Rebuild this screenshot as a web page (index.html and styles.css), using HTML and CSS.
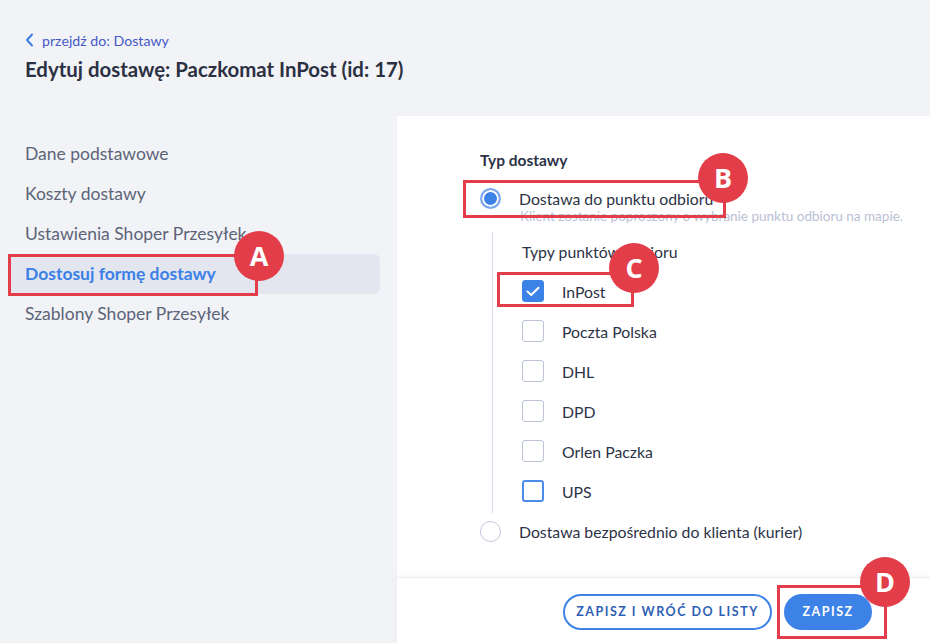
FILE: index.html
```html
<!DOCTYPE html>
<html>
	<head>
		<meta charset="utf-8">
		<title>Edytuj dostawę</title>
		<link rel="stylesheet" href="styles.css">
	</head>
	<body>
		<div class="top">
			<a class="back" href="#">
				<svg width="9" height="14" viewBox="0 0 9 14"><path d="M7 1.5 L2 7 L7 12.5" fill="none" stroke="#3b7de3" stroke-width="2" stroke-linecap="round" stroke-linejoin="round"/></svg>
				przejdź do: Dostawy
			</a>
			<h1>Edytuj dostawę: Paczkomat InPost (id: 17)</h1>
		</div>

		<div class="page">
			<ul class="nav">
				<li>Dane podstawowe</li>
				<li>Koszty dostawy</li>
				<li>Ustawienia Shoper Przesyłek</li>
				<li class="current">Dostosuj formę dostawy</li>
				<li>Szablony Shoper Przesyłek</li>
			</ul>

			<div class="panel">
				<div class="form">
					<div class="label">Typ dostawy</div>

					<div class="radio-row">
						<span class="radio checked"></span>
						<span>Dostawa do punktu odbioru</span>
					</div>
					<div class="hint">Klient zostanie poproszony o wybranie punktu odbioru na mapie.</div>

					<div class="sub">
						<div class="sub-title">Typy punktów odbioru</div>
						<div class="check-row"><span class="box checked"><svg width="14" height="11" viewBox="0 0 14 11"><path d="M1.5 5.5 L5.2 9 L12.5 1.8" fill="none" stroke="#fff" stroke-width="2" stroke-linecap="round" stroke-linejoin="round"/></svg></span>InPost</div>
						<div class="check-row"><span class="box"></span>Poczta Polska</div>
						<div class="check-row"><span class="box"></span>DHL</div>
						<div class="check-row"><span class="box"></span>DPD</div>
						<div class="check-row"><span class="box"></span>Orlen Paczka</div>
						<div class="check-row"><span class="box focus"></span>UPS</div>
					</div>

					<div class="radio-row">
						<span class="radio"></span>
						<span>Dostawa bezpośrednio do klienta (kurier)</span>
					</div>
				</div>

				<div class="footer">
					<button class="btn btn-outline">ZAPISZ I WRÓĆ DO LISTY</button>
					<button class="btn btn-primary">ZAPISZ</button>
				</div>
			</div>
		</div>

		<!-- znaczniki na zrzucie -->
		<div class="mark" style="left:8px;top:254px;width:250px;height:42px;"></div>
		<div class="badge" style="left:234px;top:231px;">A</div>
		<div class="mark" style="left:463px;top:180px;width:263px;height:38px;"></div>
		<div class="badge" style="left:698px;top:153px;">B</div>
		<div class="mark" style="left:497px;top:272px;width:137px;height:35px;"></div>
		<div class="badge" style="left:609px;top:243px;">C</div>
		<div class="mark" style="left:777px;top:585px;width:110px;height:54px;"></div>
		<div class="badge" style="left:860px;top:557px;">D</div>
	</body>
</html>
```

FILE: styles.css
```css
body{
	margin: 0;
	width: 930px;
	height: 643px;
	overflow: hidden;
	position: relative;
	background-color: #f2f3f7;
	font-family: "Lato", "Open Sans", sans-serif;
	color: #2c3346;
}
.top{
	height: 116px;
	box-sizing: border-box;
	padding: 30px 25px 0 25px;
}
.back{
	display: flex;
	align-items: center;
	gap: 8px;
	font-size: 14.2px;
	color: #4559c4;
	text-decoration: none;
	height: 20px;
}
h1{
	margin: 7px 0 0 0;
	font-size: 20.4px;
	font-weight: 700;
	color: #2b3142;
}
.page{
	display: flex;
	height: 527px;
}
.nav{
	list-style: none;
	margin: 0;
	padding: 18px 0 0 10px;
	width: 387px;
	flex-shrink: 0;
}
.nav li{  /* pozycje menu */
	width: 370px;
	height: 40px;
	line-height: 40px;
	box-sizing: border-box;
	padding-left: 15px;
	font-size: 17.5px;
	color: #5c6478;
	border-radius: 6px;
}
.nav .current{
	background-color: #e3e6ef;
	color: #3b80e6;
	font-weight: 700;
}
.panel{
	flex: 1;
	display: flex;
	flex-direction: column;
	background-color: #fff;
}
.form{
	flex: 1;
	padding: 34px 0 0 83px;
}
.label{
	font-size: 15.5px;
	font-weight: 700;
	height: 20px;
	line-height: 20px;
	margin-bottom: 16px;
}
.radio-row{
	display: flex;
	align-items: center;
	gap: 18px;
	font-size: 15.8px;
	height: 24px;
}
.radio{
	width: 21px;
	height: 21px;
	border: 1px solid #bfc6da;
	border-radius: 50%;
	box-sizing: border-box;
	flex-shrink: 0;
}
.radio.checked{
	border: 2px solid #7ea8f0;
	background-color: #3d82e6;
	box-shadow: inset 0 0 0 2px #fff;
}
.hint{
	font-size: 13.5px;
	color: #b9c0d3;
	padding-left: 40px;
	margin-top: -2px;
	height: 18px;
}
.sub{
	margin: 6px 0 6px 12px;
	border-left: 1px solid #d6dbe8;
	padding: 8px 0 2px 29px;
}
.sub-title{
	font-size: 15.8px;
	height: 24px;
	line-height: 24px;
	margin-bottom: 7px;
}
.check-row{
	display: flex;
	align-items: center;
	gap: 18px;
	font-size: 15.8px;
	height: 40px;
}
.box{
	width: 22px;
	height: 22px;
	border: 1px solid #bcc3d8;
	border-radius: 3px;
	box-sizing: border-box;
	display: flex;
	align-items: center;
	justify-content: center;
}
.box.checked{
	background-color: #3d82e6;
	border-color: #3d82e6;
}
.box.focus{
	border: 2px solid #4d8ceb;
}
.footer{
	height: 66px;
	box-sizing: border-box;
	border-top: 1px solid #eceef3;
	box-shadow: 0 -3px 6px rgba(0,0,0,0.03);
	display: flex;
	align-items: center;
	justify-content: flex-end;
	gap: 12px;
	padding: 2px 58px 0 0;
}
.btn{
	height: 36px;
	border-radius: 18px;
	font-family: "Lato", "Open Sans", sans-serif;
	font-size: 12.5px;
	font-weight: 700;
	letter-spacing: 1.5px;
	cursor: pointer;
}
.btn-outline{
	width: 209px;
	background-color: #fff;
	border: 2px solid #3d82e6;
	color: #2f5fb5;
}
.btn-primary{
	width: 88px;
	background-color: #3d82e6;
	border: none;
	color: #fff;
}
.mark{
	position: absolute;
	border: 3px solid #e23d48;
	box-sizing: border-box;
}
.badge{
	position: absolute;
	width: 50px;
	height: 50px;
	border-radius: 50%;
	background-color: #e23d48;
	color: #fff;
	font-family: "Open Sans", sans-serif;
	font-size: 27px;
	font-weight: 700;
	line-height: 50px;
	text-align: center;
}
```
